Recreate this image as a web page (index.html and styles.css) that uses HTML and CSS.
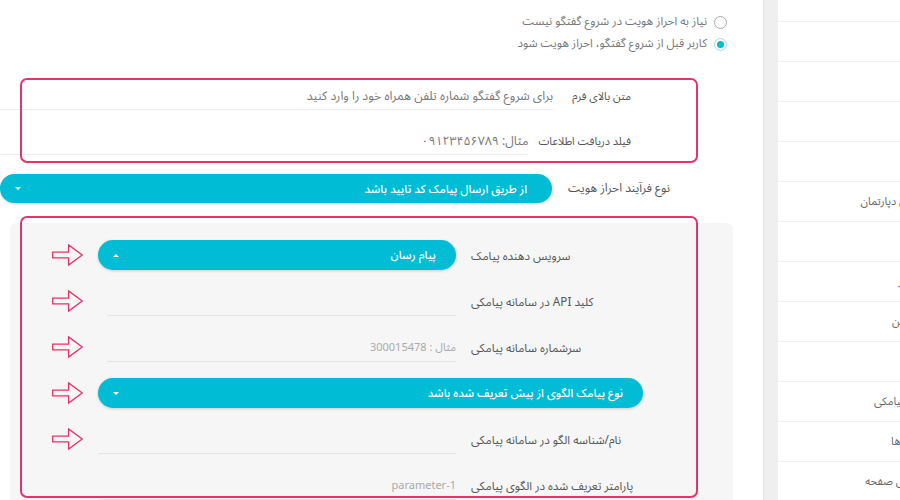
FILE: index.html
```html
<!DOCTYPE html>
<html lang="fa" dir="rtl">
<head>
  <meta charset="UTF-8" />
  <title>تنظیمات احراز هویت</title>
  <link rel="stylesheet" href="styles.css">
</head>
<body>
  <div class="page">
    <!-- Side menu -->
    <aside class="sidebar">
      <div class="sidebar-edge"></div>
      <div class="menu">
        <div class="menu-item first"><span></span></div>
        <div class="menu-item"><span></span></div>
        <div class="menu-item"><span></span></div>
        <div class="menu-item"><span></span></div>
        <div class="menu-item"><span></span></div>
        <div class="menu-item"><span>تنظیمات کل دپارتمان</span></div>
        <div class="menu-item"><span></span></div>
        <div class="menu-item"><span>مدیریت کاربر</span></div>
        <div class="menu-item"><span>پیام‌های آفلاین</span></div>
        <div class="menu-item"><span></span></div>
        <div class="menu-item"><span>پنل سامانه پیامکی</span></div>
        <div class="menu-item"><span>مدیریت الگوها</span></div>
        <div class="menu-item"><span>تنظیمات کلی صفحه</span></div>
      </div>
    </aside>

    <main class="main">
      <!-- Identity options -->
      <div class="radios">
        <div class="radio"><span class="radio-dot"></span><span class="radio-text">نیاز به احراز هویت در شروع گفتگو نیست</span></div>
        <div class="radio checked"><span class="radio-dot"></span><span class="radio-text">کاربر قبل از شروع گفتگو، احراز هویت شود</span></div>
      </div>

      <div class="field-row first">
        <div class="field-label">متن بالای فرم</div>
        <div class="field-input">برای شروع گفتگو شماره تلفن همراه خود را وارد کنید</div>
      </div>
      <div class="field-row">
        <div class="field-label">فیلد دریافت اطلاعات</div>
        <div class="field-input">مثال: ۰۹۱۲۳۴۵۶۷۸۹</div>
      </div>

      <div class="select-row">
        <div class="select-label">نوع فرآیند احراز هویت</div>
        <div class="pill wide">از طریق ارسال پیامک کد تایید باشد<span class="caret"></span></div>
      </div>

      <!-- SMS settings -->
      <div class="panel">
        <div class="panel-row">
          <div class="panel-label">سرویس دهنده پیامک</div>
          <div class="pill panel-field">پیام رسان<span class="caret up"></span></div>
          <svg class="arrow" viewBox="0 0 31 22"><path d="M0.7 8.2 H16.6 V0.9 L30.2 11 L16.6 21.1 V13.8 H0.7 Z"/></svg>
        </div>
        <div class="panel-row">
          <div class="panel-label">کلید API در سامانه پیامکی</div>
          <div class="panel-input api"></div>
          <svg class="arrow" viewBox="0 0 31 22"><path d="M0.7 8.2 H16.6 V0.9 L30.2 11 L16.6 21.1 V13.8 H0.7 Z"/></svg>
        </div>
        <div class="panel-row">
          <div class="panel-label">سرشماره سامانه پیامکی</div>
          <div class="panel-input api placeholder">مثال : 300015478</div>
          <svg class="arrow" viewBox="0 0 31 22"><path d="M0.7 8.2 H16.6 V0.9 L30.2 11 L16.6 21.1 V13.8 H0.7 Z"/></svg>
        </div>
        <div class="panel-row full">
          <div class="pill panel-wide">نوع پیامک الگوی از پیش تعریف شده باشد<span class="caret"></span></div>
          <svg class="arrow" viewBox="0 0 31 22"><path d="M0.7 8.2 H16.6 V0.9 L30.2 11 L16.6 21.1 V13.8 H0.7 Z"/></svg>
        </div>
        <div class="panel-row">
          <div class="panel-label">نام/شناسه الگو در سامانه پیامکی</div>
          <div class="panel-input"></div>
          <svg class="arrow" viewBox="0 0 31 22"><path d="M0.7 8.2 H16.6 V0.9 L30.2 11 L16.6 21.1 V13.8 H0.7 Z"/></svg>
        </div>
        <div class="panel-row">
          <div class="panel-label">پارامتر تعریف شده در الگوی پیامکی</div>
          <div class="panel-input placeholder">parameter-1</div>
        </div>
      </div>

      <!-- highlight frames -->
      <div class="frame frame-top"></div>
      <div class="frame frame-panel"></div>
    </main>
  </div>
</body>
</html>
```

FILE: styles.css
```css
* {
  box-sizing: border-box;
  margin: 0;
  padding: 0;
}
body {
  font-family: "Noto Sans Arabic", "Vazirmatn", "DejaVu Sans", "Noto Sans", sans-serif;
  font-size: 11px;
  color: #666;
  background-color: #fff;
  direction: rtl;
}
.page {
  display: flex;
  width: 900px;
  height: 500px;
  overflow: hidden;
}
.sidebar {
  direction: ltr;
  display: flex;
  width: 137px;
  flex: none;
}
.sidebar-edge {
  width: 15px;
  flex: none;
  background-color: #efefef;
  border-left: 1px solid #e4e4e4;
}
.menu {
  width: 122px;
  flex: none;
  overflow: hidden;
}
.menu-item {
  direction: rtl;
  width: 230px;
  height: 40px;
  line-height: 40px;
  border-bottom: 1px solid #f0f0f0;
  padding-right: 54px;
  text-align: right;
  white-space: nowrap;
  color: #666;
  font-size: 11px;
}
.menu-item.first {
  height: 22px;
}
.main {
  position: relative;
  width: 763px;
  flex: none;
  overflow: hidden;
}
.radios {
  padding-top: 11px;
  margin-right: 36px;
  font-size: 11.6px;
}
.radio {
  display: flex;
  align-items: center;
  gap: 7px;
  height: 22px;
  color: #777;
}
.radio-text {
  display: block;
  height: 18px;
  line-height: 18px;
}
.radio-dot {
  width: 13px;
  height: 13px;
  flex: none;
  border: 1px solid #aaa;
  border-radius: 50%;
  background-color: #fff;
  position: relative;
}
.radio.checked .radio-dot {
  border-color: #9adfe9;
}
.radio.checked .radio-dot::after {
  content: "";
  position: absolute;
  top: 2px;
  right: 2px;
  width: 7px;
  height: 7px;
  border-radius: 50%;
  background-color: #00bcd4;
}
.field-row {
  display: flex;
  gap: 10px;
  padding-right: 132px;
  margin-top: 15px;
  height: 30px;
}
.field-row.first {
  margin-top: 25px;
}
.field-label {
  min-width: 68px;
  flex: none;
  line-height: 33px;
  white-space: nowrap;
  color: #555;
}
.field-input {
  flex: 1;
  min-width: 0;
  line-height: 33px;
  border-bottom: 1px solid #ececec;
  color: #777;
  font-size: 12.3px;
  white-space: nowrap;
}
.select-row {
  display: flex;
  align-items: center;
  gap: 16px;
  padding-right: 91px;
  margin-top: 19px;
}
.select-label {
  width: 104px;
  flex: none;
  text-align: left;
  white-space: nowrap;
  color: #555;
  font-size: 12px;
}
.pill {
  display: flex;
  justify-content: space-between;
  align-items: center;
  flex: none;
  height: 30px;
  padding: 0 20px 0 15px;
  border-radius: 15px;
  background-color: #00bcd4;
  box-shadow: 0 1px 3px rgba(0, 0, 0, 0.18);
  color: #fff;
  font-size: 11.5px;
  font-weight: 500;
  white-space: nowrap;
}
.pill.wide {
  width: 552px;
  height: 29px;
  padding-right: 25px;
}
.caret {
  width: 0;
  height: 0;
  border-left: 3px solid transparent;
  border-right: 3px solid transparent;
  border-top: 3px solid #fff;
}
.caret.up {
  border-top: none;
  border-bottom: 3px solid #fff;
}
.panel {
  margin: 20px 30px 0 10px;
  height: 300px;
  padding-top: 17px;
  background-color: #f6f6f6;
  border-radius: 6px;
}
.panel-row {
  display: flex;
  align-items: center;
  gap: 15px;
  height: 30px;
  margin-bottom: 16px;
  padding-right: 93px;
}
.panel-row.full {
  padding-right: 90px;
}
.panel-label {
  width: 169px;
  flex: none;
  text-align: left;
  white-space: nowrap;
  color: #555;
  font-size: 11.7px;
  padding-top: 2px;
}
.panel-field {
  width: 358px;
}
.panel-wide {
  width: 545px;
}
.panel-input {
  width: 358px;
  height: 30px;
  flex: none;
  line-height: 32px;
  border-bottom: 1px solid #e4e4e4;
  color: #777;
}
.panel-input.api {
  border-image: linear-gradient(to left, #e4e4e4 348px, transparent 348px) 1;
}
.placeholder {
  color: #aaa;
}
.arrow {
  width: 31px;
  height: 22px;
  flex: none;
}
.arrow path {
  fill: none;
  stroke: #e8336a;
  stroke-width: 1.3;
}
.frame {
  position: absolute;
  left: 20px;
  width: 678px;
  border: 2px solid #e8336a;
  border-radius: 7px;
}
.frame-top {
  top: 78px;
  height: 85px;
}
.frame-panel {
  top: 216px;
  height: 282px;
}
```
